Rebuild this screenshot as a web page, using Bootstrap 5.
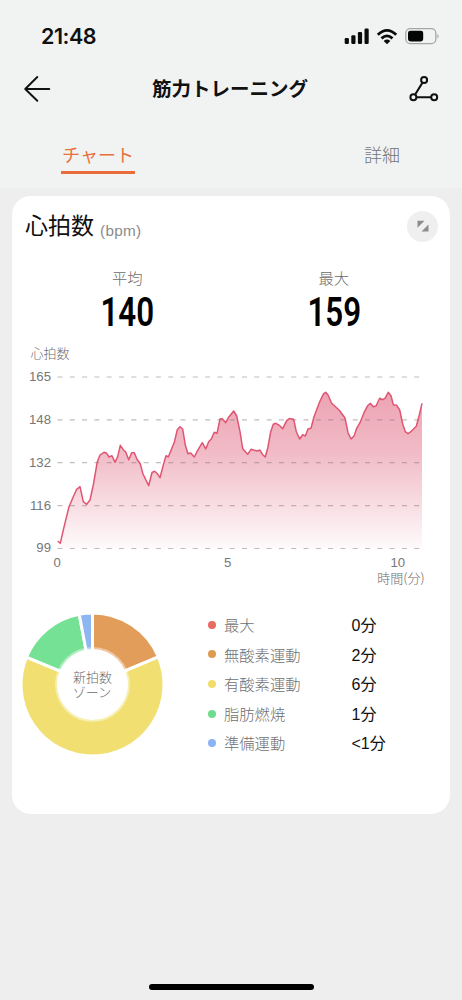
<!DOCTYPE html>
<html lang="ja">
<head>
<meta charset="utf-8">
<meta name="viewport" content="width=device-width, initial-scale=1">
<title>筋力トレーニング</title>
<link href="https://cdn.jsdelivr.net/npm/bootstrap@5.3.0/dist/css/bootstrap.min.css" rel="stylesheet">
<style>
  body { background:#eeeeee; font-family:"Liberation Sans","Noto Sans CJK JP",sans-serif; color:#111; width:462px; height:1000px; overflow:hidden; }
  svg { display:block; }
  .top-area { background:#f0f3f2; height:188px; }
  .status-row { height:72px; padding:2px 22px 0 41px; }
  .clock { font:600 21.5px/1 Inter,sans-serif; letter-spacing:-.45px; }
  .title-row { height:34px; padding:0 23px 0 23px; }
  .screen-title { font:700 19.5px/32px "Noto Sans CJK JP",sans-serif; padding-bottom:2px; }
  .tab-row { height:82px; padding:32px 62px 0 61px; font:400 18px/32px "Noto Sans CJK JP",sans-serif; }
  .tab-item { height:36px; color:#737676; font-weight:300; }
  .tab-item.on { color:#ea6f3c; border-bottom:3px solid #ea6c3b; width:74px; font-weight:400; }
  .hr-card { margin:8px 12px 0 12px; height:617.5px; border-radius:19px; background:#fff; }
  .card-head { height:60px; padding:0 12px 0 13px; }
  .head-title { font:400 23px/56px "Noto Sans CJK JP",sans-serif; padding-bottom:4px; }
  .unit { font:400 15.3px/1 "Liberation Sans",sans-serif; letter-spacing:.3px; color:#8b8b8b; padding-top:9px; margin-left:6px; }
  .expand { width:31px; height:31px; background:#efefef; }
  .stats { height:84px; padding-top:10px; }
  .stat { width:206.5px; }
  .stat-label { font:300 15.3px/22px "Noto Sans CJK JP",sans-serif; color:#6c6c6c; }
  .stat-value { font:600 41.5px/46px Roboto,sans-serif; color:#000; transform:scaleX(.755); margin-top:1px; }
  .axis { font-family:"Liberation Sans",sans-serif; font-size:13.2px; fill:#777; }
  .axis-jp { font-family:"Noto Sans CJK JP",sans-serif; font-weight:300; fill:#6c6c6c; }
  .zone-list { width:220px; padding-top:16px; margin-left:34px; }
  .zone { height:29.6px; font:300 15.3px/29.6px "Noto Sans CJK JP",sans-serif; }
  .dot { width:8px; height:8px; margin-right:8px; }
  .zone-name { width:127.5px; color:#707070; }
  .zone-time { font-family:"Liberation Sans","Noto Sans CJK JP",sans-serif; font-size:16px; color:#111; font-weight:400; padding-top:2px; }
  .home-bar { width:165px; height:6px; background:#000; margin:170.5px auto 0 148.5px; }
</style>
</head>
<body>
<header class="top-area">
  <div class="status-row d-flex align-items-center justify-content-between">
    <span class="clock">21:48</span>
    <svg width="96" height="20" viewBox="344 27 96 20">
      <g fill="#0b0b0b">
        <rect x="344.7" y="38" width="4.2" height="6" rx="1.2"/><rect x="351.3" y="35.3" width="4.2" height="8.7" rx="1.2"/><rect x="357.9" y="32" width="4.2" height="12" rx="1.2"/><rect x="364.5" y="28.5" width="4.2" height="15.5" rx="1.2"/>
      </g>
      <g fill="none" stroke="#0b0b0b" stroke-width="2.8"><path d="M377.8 34.7Q387 26 396.2 34.7"/><path d="M381.5 38.4Q387 33.4 392.5 38.4"/></g>
      <path d="M383.7 41Q387 38.2 390.3 41L387 44.2Z" fill="#0b0b0b"/>
      <rect x="405.8" y="28.6" width="30" height="15" rx="4.4" fill="none" stroke="#a5a7a6" stroke-width="1.3"/>
      <rect x="408" y="30.7" width="15.2" height="10.8" rx="2.4" fill="#050505"/>
      <path d="M437.3 33.7Q440 36.1 437.3 38.6Z" fill="#a5a7a6"/>
    </svg>
  </div>
  <div class="title-row d-flex align-items-center justify-content-between">
    <svg width="28" height="28" viewBox="23 75 28 28" fill="none" stroke="#111" stroke-width="1.9" stroke-linecap="round" stroke-linejoin="round"><path d="M37.3 77L25.2 89L37.3 100.8M25.2 89H49.3"/></svg>
    <h1 class="screen-title m-0">筋力トレーニング</h1>
    <svg width="30" height="28" viewBox="409 75 30 28" fill="none" stroke="#111" stroke-width="2"><circle cx="424.1" cy="80" r="3"/><circle cx="413.4" cy="97.3" r="3"/><circle cx="434.2" cy="97.3" r="3"/><path d="M422.5 82.6L415 94.7M416.4 97.3H431.2"/></svg>
  </div>
  <nav class="tab-row d-flex justify-content-between">
    <div class="tab-item on text-center">チャート</div>
    <div class="tab-item">詳細</div>
  </nav>
</header>

<main class="hr-card">
  <div class="card-head d-flex align-items-center">
    <span class="head-title">心拍数</span><span class="unit">(bpm)</span>
    <span class="expand rounded-circle ms-auto d-flex align-items-center justify-content-center">
      <svg width="12" height="12" viewBox="0 0 12 12" fill="#8d8d8d"><path d="M.5 .8H7.5L.5 7.8Z"/><path d="M11.5 4.5V11.5H4.5Z"/></svg>
    </span>
  </div>
  <div class="stats d-flex ms-2 ps-1">
    <div class="stat text-center"><div class="stat-label">平均</div><div class="stat-value">140</div></div>
    <div class="stat text-center"><div class="stat-label">最大</div><div class="stat-value">159</div></div>
  </div>
  <svg width="438" height="254" viewBox="12 340 438 254">
    <defs><linearGradient id="fade" gradientUnits="userSpaceOnUse" x1="0" y1="392" x2="0" y2="548"><stop offset="0" stop-color="#eda3b3"/><stop offset=".4" stop-color="#f1bcc7"/><stop offset="1" stop-color="#fefafb"/></linearGradient></defs>
    <polygon id="area" fill="url(#fade)"/>
    <g stroke="#8a7a7d" stroke-opacity=".5" stroke-width="1.2" stroke-dasharray="5 7.3"><path d="M57.5 377H422"/><path d="M57.5 419.8H422"/><path d="M57.5 462.6H422"/><path d="M57.5 505.6H422"/><path d="M57.5 548.5H422"/></g>
    <polyline id="line" fill="none" stroke="#df5672" stroke-width="1.5" stroke-linejoin="round" points="57.7,541 60.3,543.3 63.7,528.3 69,506.7 73.3,496.7 76.7,489.3 80,486.7 83.3,501.7 86.7,504.3 90,500 93.3,485 97.3,461.7 100,455 104,452.3 106.7,453.3 109,457 112,455.7 115,462.3 117.7,456.7 120.3,445.3 123.3,449.7 125.7,452 128.7,459.7 131.7,452.7 134.3,452.7 137,459.3 140.3,464 143,474 148.7,485.7 152,472.5 154.7,471.3 157.3,473.7 160,477.7 163.3,465 166,455.7 168.3,457 174.3,442.3 177.3,429.7 180,426.7 182.7,429 185.3,445 188,453.7 190.7,453 194.3,457 197.7,450.3 202.3,442.7 205.7,449 208.7,441.7 211.3,439 214.3,432.3 217,433.3 220,419 222.3,418.7 225.7,422.7 229,416.7 233.7,411 236.7,416 240,431.7 242.7,448.7 247.7,454.3 251,449.3 254.3,450.3 257.3,451 259.7,450 262.7,454.7 265.3,457 267.7,448.3 270.7,431.7 273.3,424.3 276,423.3 279.3,425.3 282.7,428.7 286.7,420.7 289.3,418.6 293.7,419.3 296.3,431.7 299.7,439 302.7,434.7 305.3,436 308,429 311,428.3 314,416.7 320,401 323.7,393.7 325.7,392.3 328,395 331.7,403.3 339.3,410.3 345,418 348,432.7 351,439 354,436 356.7,428.3 360,422.7 364,412.7 367.7,405.7 370.3,403.3 373.3,406.7 376,406 379.7,398.3 382.7,399.7 385,398.3 388.3,392.3 391,395.7 393.3,404.7 396.7,405.3 399.7,410 402.7,424 405.3,431.7 408,433.7 411.3,431.3 416.3,426.3 419.3,415 422,403.3"/>
    <text class="axis-jp" x="30.5" y="357.7" font-size="13">心拍数</text>
    <g class="axis" text-anchor="end"><text x="51" y="381">165</text><text x="51" y="423.7">148</text><text x="51" y="466.6">132</text><text x="51" y="509.5">116</text><text x="51" y="552.3">99</text></g>
    <g class="axis" text-anchor="middle"><text x="57.1" y="567.3">0</text><text x="227.7" y="567.3">5</text><text x="397.8" y="567.3">10</text></g>
    <text class="axis-jp" x="424.5" y="583.3" font-size="13" text-anchor="end">時間(分)</text>
  </svg>
  <div class="d-flex">
    <svg width="162" height="190" viewBox="12 594 162 190">
      <g id="ring" stroke="#fff" stroke-width="3"></g>
      <circle cx="92.5" cy="684.5" r="37.5" fill="#fff" fill-opacity=".45"/>
      <circle cx="92.5" cy="684.5" r="35.5" fill="#fff"/>
      <text class="axis-jp" font-size="13" text-anchor="middle"><tspan x="92.5" y="682">新拍数</tspan><tspan x="92" y="696.5">ゾーン</tspan></text>
    </svg>
    <div class="zone-list" id="zones"></div>
  </div>
</main>
<div class="home-bar rounded-pill"></div>

<script src="https://cdn.jsdelivr.net/npm/bootstrap@5.3.0/dist/js/bootstrap.bundle.min.js"></script>
<script>
  // fill the area under the heart-rate line
  const pts = document.getElementById('line').getAttribute('points');
  document.getElementById('area').setAttribute('points', pts + ' 422,548.5 57.7,548.5');

  // zone donut: start angle, end angle, colour
  const cx = 92.5, cy = 684.5, r = 71.5;
  const at = a => [cx + r * Math.sin(a * Math.PI / 180), cy - r * Math.cos(a * Math.PI / 180)].map(v => v.toFixed(2)).join(' ');
  document.getElementById('ring').innerHTML = [[0, 67.3, '#e39d5a'], [67.3, 292.5, '#f1e071'], [292.5, 349.3, '#75e194'], [349.3, 360, '#8eb6f0']]
    .map(([a, b, c]) => `<path fill="${c}" d="M${cx} ${cy}L${at(a)}A${r} ${r} 0 ${b - a > 180 ? 1 : 0} 1 ${at(b)}Z"/>`).join('');

  document.getElementById('zones').innerHTML = [['最大', '0分', '#e96a5f'], ['無酸素運動', '2分', '#df9a51'], ['有酸素運動', '6分', '#f1dd6c'], ['脂肪燃焼', '1分', '#6edc8c'], ['準備運動', '&lt;1分', '#8cb3f5']]
    .map(([n, t, c]) => `<div class="zone d-flex align-items-center"><span class="dot rounded-circle" style="background:${c}"></span><span class="zone-name">${n}</span><span class="zone-time">${t}</span></div>`).join('');
</script>
</body>
</html>
